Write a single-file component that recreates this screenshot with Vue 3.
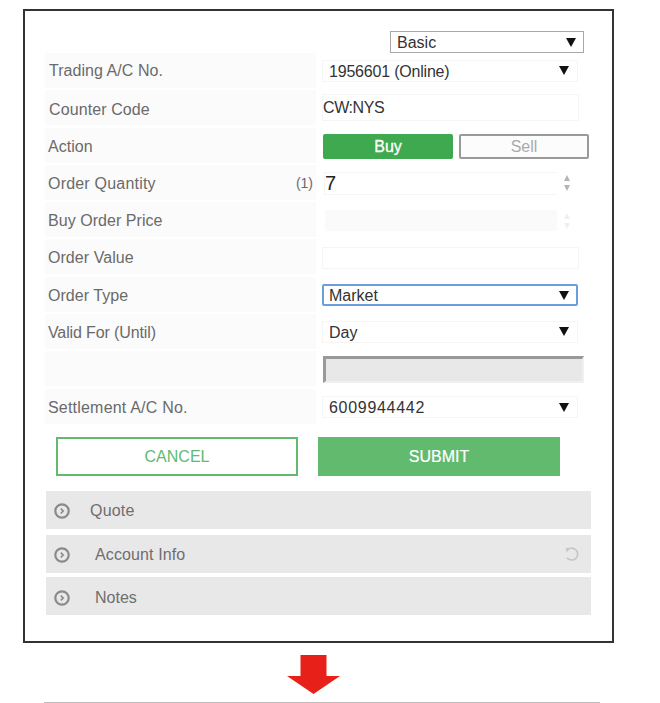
<script setup>
const panels = [
  { name: 'Quote', cls: 'first' },
  { name: 'Account Info', cls: 'second', refresh: true },
  { name: 'Notes', cls: 'third' }
]
</script>

<template>
  <div class="page">
    <section class="frame">
      <div class="mode-row">
        <div class="select basic"><span>Basic</span><i class="caret"></i></div>
      </div>

      <div class="rows">
        <div class="row">
          <div class="label">Trading A/C No.</div>
          <div class="select field"><span class="tight">1956601 (Online)</span><i class="caret"></i></div>
        </div>
        <div class="row">
          <div class="label">Counter Code</div>
          <div class="input code">CW:NYS</div>
        </div>
        <div class="row">
          <div class="label">Action</div>
          <div class="actions">
            <div class="buy">Buy</div>
            <div class="sell">Sell</div>
          </div>
        </div>
        <div class="row">
          <div class="label wide">Order Quantity<span class="lot">(1)</span></div>
          <div class="number">
            <div class="input qty">7</div>
            <div class="spin"><b class="up"></b><b class="down"></b></div>
          </div>
        </div>
        <div class="row">
          <div class="label">Buy Order Price</div>
          <div class="number">
            <div class="input price"></div>
            <div class="spin faint"><b class="up"></b><b class="down"></b></div>
          </div>
        </div>
        <div class="row">
          <div class="label">Order Value</div>
          <div class="input value"></div>
        </div>
        <div class="row">
          <div class="label">Order Type</div>
          <div class="select field focused"><span>Market</span><i class="caret"></i></div>
        </div>
        <div class="row">
          <div class="label narrow">Valid For (Until)</div>
          <div class="select field"><span>Day</span><i class="caret"></i></div>
        </div>
        <div class="row">
          <div class="label"></div>
          <div class="disabled"></div>
        </div>
        <div class="row">
          <div class="label wide">Settlement A/C No.</div>
          <div class="select field"><span class="digits">6009944442</span><i class="caret"></i></div>
        </div>
      </div>

      <div class="submit-row">
        <div class="cancel">CANCEL</div>
        <div class="submit">SUBMIT</div>
      </div>

      <div class="panels">
        <div v-for="p in panels" :key="p.name" class="panel" :class="p.cls">
          <svg class="chev" width="16" height="16" viewBox="0 0 16 16">
            <circle cx="8" cy="8" r="6.7" fill="none" stroke="#8a8a8a" stroke-width="2.2" />
            <path d="M6.8 5.6 9.2 8 6.8 10.4" fill="none" stroke="#8a8a8a" stroke-width="1.6" />
          </svg>
          <span class="panel-name">{{ p.name }}</span>
          <svg v-if="p.refresh" class="refresh" width="16" height="16" viewBox="0 0 16 16">
            <path d="M3.6 3.6A6 6 0 1 1 3 11.8" fill="none" stroke="#c6c6c6" stroke-width="1.7" />
            <path d="M1.6 1.8 6.4 2.4 2.6 6.2Z" fill="#c6c6c6" />
          </svg>
        </div>
      </div>
    </section>

    <svg class="arrow" width="54" height="40" viewBox="0 0 54 40">
      <path d="M13.5 0H39.5V21H53L26.5 39 0 21H13.5Z" fill="#e8201a" />
    </svg>
    <div class="rule"></div>
  </div>
</template>

<style>
html, body { background: #fff; }
</style>

<style scoped>
.page {
  width: 660px;
  height: 703px;
  padding: 9px 0 0 23px;
  box-sizing: border-box;
  overflow: hidden;
  font-family: "Liberation Sans", Arial, sans-serif;
  font-size: 16px;
  color: #333;
}
.frame {
  width: 591px;
  height: 634px;
  box-sizing: border-box;
  border: 2px solid #333;
  padding: 20px 21px 0 20px;
}
.mode-row {
  display: flex;
  justify-content: flex-end;
  height: 22px;
  padding-right: 7px;
}
.select {
  display: flex;
  align-items: center;
  justify-content: space-between;
  box-sizing: border-box;
  padding: 0 8px 0 6px;
  background: #fff;
  color: #333;
}
.select span { margin-top: 2px; }
.tight { letter-spacing: -0.2px; }
.digits { letter-spacing: 0.7px; }
.basic {
  width: 194px;
  height: 22px;
  border: 1px solid #a8a8a8;
  padding-right: 7px;
}
.caret {
  width: 0;
  height: 0;
  border-left: 5px solid transparent;
  border-right: 5px solid transparent;
  border-top: 9px solid #111;
}
.rows {
  display: flex;
  flex-direction: column;
  gap: 2.3px;
}
.row {
  display: flex;
  align-items: center;
  height: 35px;
}
.row:nth-child(n+3) > :last-child { margin-top: 2px; }
.row:nth-child(8) > :last-child { margin-top: 0; }
.label {
  position: relative;
  width: 271px;
  height: 35px;
  line-height: 37px;
  padding-left: 3px;
  box-sizing: border-box;
  flex: none;
  background: #fbfbfb;
  color: #6a6a6a;
  letter-spacing: 0.05px;
}
.row:nth-child(1) .label { line-height: 35px; padding-left: 4px; }
.row:nth-child(2) .label { line-height: 39px; padding-left: 4px; letter-spacing: 0.1px; }
.wide { letter-spacing: 0.2px; }
.narrow { letter-spacing: -0.12px; }
.lot {
  position: absolute;
  right: 3px;
  top: 0;
  font-size: 14px;
  letter-spacing: 0;
}
.field {
  width: 256px;
  height: 22px;
  margin-left: 6px;
  border: 1px solid #f5f5f5;
}
.focused {
  border: 2px solid #6b9fdb;
  border-radius: 2px;
  padding-left: 5px;
  padding-right: 7px;
}
.input {
  box-sizing: border-box;
  background: #fff;
  border: 1px solid #f5f5f5;
}
.code {
  width: 257px;
  height: 27px;
  line-height: 25px;
  margin-left: 6px;
  letter-spacing: -0.4px;
}
.value {
  width: 257px;
  height: 22px;
  margin-left: 6px;
}
.actions {
  display: flex;
  gap: 6px;
  margin-left: 7px;
}
.buy, .sell {
  width: 130px;
  height: 25px;
  line-height: 25px;
  box-sizing: border-box;
  text-align: center;
  border-radius: 2px;
}
.buy {
  background: #3fa950;
  color: #fff;
  -webkit-text-stroke: 0.3px #fff;
}
.sell {
  border: 2px solid #999;
  line-height: 21px;
  color: #aaa;
  background: #fcfcfc;
}
.number {
  display: flex;
  align-items: center;
  margin-left: 8px;
}
.qty {
  width: 233px;
  height: 23px;
  line-height: 21px;
  font-size: 20px;
  color: #222;
  border-right: 0;
}
.price {
  width: 232px;
  height: 21px;
  margin-left: 1px;
  background: #fafafa;
  border: 0;
}
.spin {
  display: flex;
  flex-direction: column;
  gap: 4px;
  margin-left: 7px;
}
.spin b {
  display: block;
  width: 0;
  height: 0;
  border-left: 3.5px solid transparent;
  border-right: 3.5px solid transparent;
}
.up { border-bottom: 6px solid #b5b5b5; }
.down { border-top: 6px solid #b5b5b5; }
.faint .up { border-bottom-color: #efefef; }
.faint .down { border-top-color: #efefef; }
.disabled {
  width: 261px;
  height: 27px;
  margin-left: 7px;
  box-sizing: border-box;
  background: #e8e8e8;
  border-style: solid;
  border-width: 3px 2px 2px 3px;
  border-color: #999 #f0f0f0 #f0f0f0 #999;
}
.submit-row {
  display: flex;
  gap: 20px;
  margin-top: 13px;
  padding-left: 11px;
}
.cancel, .submit {
  width: 242px;
  height: 39px;
  line-height: 35px;
  box-sizing: border-box;
  text-align: center;
}
.cancel {
  border: 2px solid #62ba6f;
  color: #62ba6f;
}
.submit {
  border: 2px solid #62ba6f;
  background: #62ba6f;
  color: #fff;
  -webkit-text-stroke: 0.2px #fff;
}
.panels {
  display: flex;
  flex-direction: column;
  margin-top: 15px;
  margin-left: 1px;
}
.panel {
  display: flex;
  align-items: center;
  width: 545px;
  height: 38px;
  background: #e8e8e8;
  color: #6e6e6e;
  box-sizing: border-box;
  padding-left: 8px;
}
.second { margin-top: 6px; }
.third { margin-top: 4px; }
.chev { flex: none; margin-top: 2px; }
.panel-name { margin-left: 20px; margin-top: 2px; letter-spacing: 0.2px; }
.second .panel-name, .third .panel-name { margin-left: 25px; }
.second .panel-name { letter-spacing: 0.12px; }
.third .panel-name { margin-top: 4px; letter-spacing: 0; }
.third .chev { margin-top: 4px; }
.refresh { margin-left: auto; margin-right: 11px; }
.arrow {
  display: block;
  margin: 12px 0 0 264px;
}
.rule {
  width: 556px;
  height: 1px;
  margin: 7px 0 0 21px;
  background: #bcbcbc;
}
</style>
